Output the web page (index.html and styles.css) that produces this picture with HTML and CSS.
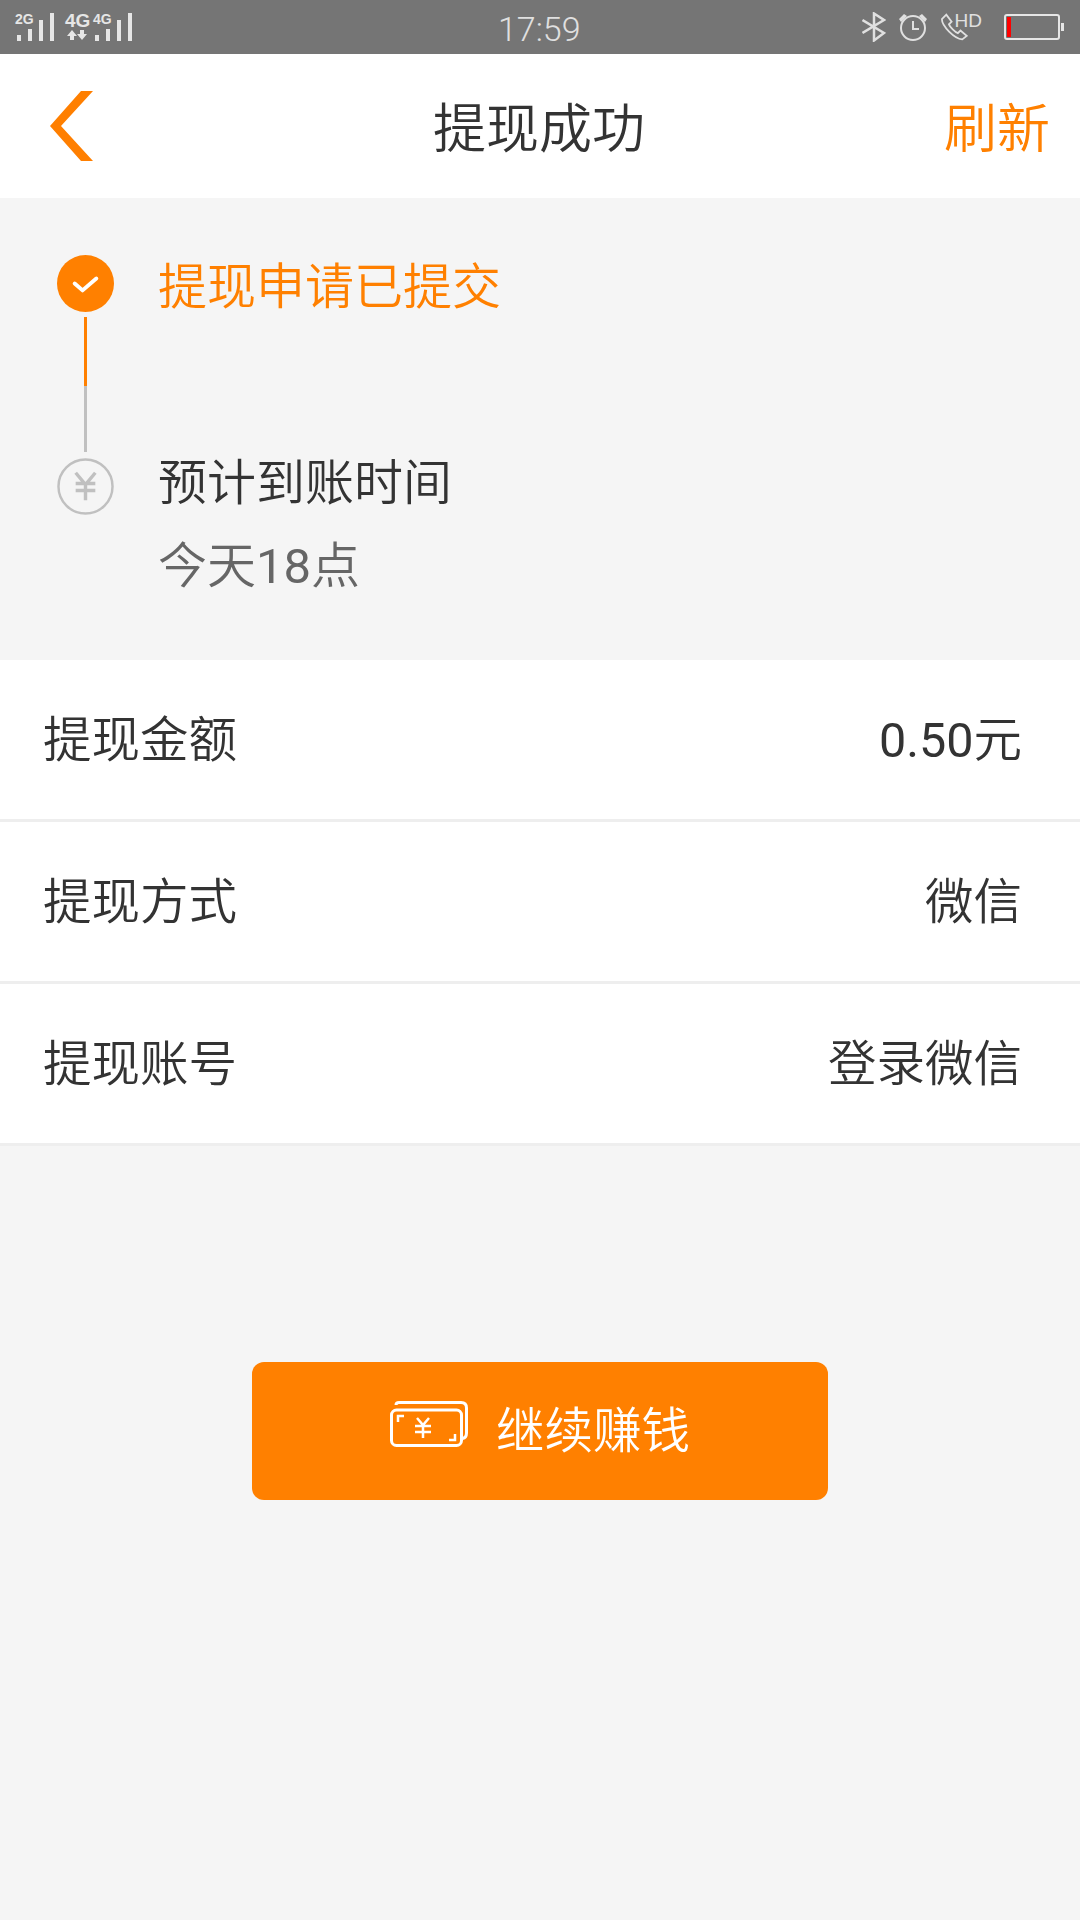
FILE: index.html
```html
<!DOCTYPE html>
<html lang="zh-CN">
<head>
    <meta charset="UTF-8">
    <meta name="viewport" content="width=device-width, initial-scale=1.0">
    <title>提现成功</title>
    <link rel="stylesheet" href="styles.css">
</head>
<body>
    <div class="status-bar">
        <svg class="status-signal" width="140" height="54" viewBox="0 0 140 54">
            <g fill="#e6e6e6">
                <rect x="17" y="35" width="4" height="6"/>
                <rect x="28" y="29" width="4" height="12"/>
                <rect x="39" y="20" width="4" height="21"/>
                <rect x="50" y="13" width="4" height="28"/>
                <rect x="95" y="35" width="4" height="6"/>
                <rect x="106" y="29" width="4" height="12"/>
                <rect x="117" y="20" width="4" height="21"/>
                <rect x="128" y="13" width="4" height="28"/>
                <path d="M72 30l5 6h-3v4h-4v-4h-3zM82 40l5-6h-3v-4h-4v4h-3z"/>
            </g>
            <g fill="#e6e6e6" font-family="'Liberation Sans', sans-serif" font-weight="bold">
                <text x="15" y="24" font-size="14">2G</text>
                <text x="65" y="27" font-size="19">4G</text>
                <text x="93" y="24" font-size="14">4G</text>
            </g>
        </svg>
        <div class="status-time">17:59</div>
        <div class="status-right">
            <svg width="24" height="30" viewBox="0 0 24 30" fill="none" stroke="#e0e0e0" stroke-width="2.500">
                <path d="M0.500 21L22 8 12 1.500v27L22 21 0.500 8"/>
            </svg>
            <svg width="28" height="30" viewBox="0 0 28 30" fill="none" stroke="#e0e0e0" stroke-width="2">
                <circle cx="14" cy="16" r="12"/>
                <path d="M14 9v8h6"/>
                <path d="M0 7l5-5 3 2-6 6zM28 7l-5-5-3 2 6 6z" fill="#e0e0e0" stroke="none"/>
            </svg>
            <div class="call-hd">
                <svg width="30" height="30" viewBox="0 0 30 30" fill="none" stroke="#e0e0e0" stroke-width="2">
                    <path d="M6 1L1 6c0 8 14 22 23 23l5-4-7-6-3 3c-3-1-9-7-10-10l3-3z"/>
                </svg>
                <span class="hd">HD</span>
            </div>
            <div class="battery">
                <div class="battery-body"><div class="battery-level"></div></div>
                <div class="battery-tip"></div>
            </div>
        </div>
    </div>

    <div class="nav">
        <svg class="nav-back" width="43" height="70" viewBox="0 0 43 70">
            <path d="M31 0h12L11 35l32 35H31L0 35z" fill="#ff7f00"/>
        </svg>
        <div class="nav-title">提现成功</div>
        <div class="nav-action">刷新</div>
    </div>

    <div class="steps">
        <div class="step-icons">
            <svg width="57" height="57" viewBox="0 0 58 58">
                <circle cx="29" cy="29" r="29" fill="#ff8000"/>
                <path d="M18 29l8 7 14-12" fill="none" stroke="#fff" stroke-width="4" stroke-linecap="round" stroke-linejoin="round"/>
            </svg>
            <div class="step-line"></div>
            <svg width="57" height="57" viewBox="0 0 58 58" fill="none" stroke="#c0c0c0">
                <circle cx="29" cy="29" r="27.500" stroke-width="2.500"/>
                <path d="M19 15l10 12 10-12M19 26h20M19 33h20M29 26v17" stroke-width="3.500"/>
            </svg>
        </div>
        <div class="step-text">
            <div class="step-done">提现申请已提交</div>
            <div class="step-title">预计到账时间</div>
            <div class="step-note">今天<span class="num">18</span>点</div>
        </div>
    </div>

    <div class="rows">
        <div class="row"><span class="row-text">提现金额</span><span class="row-text"><span class="num">0.50</span>元</span></div>
        <div class="row"><span class="row-text">提现方式</span><span class="row-text">微信</span></div>
        <div class="row"><span class="row-text">提现账号</span><span class="row-text">登录微信</span></div>
    </div>

    <div class="action">
        <div class="action-btn">
            <svg class="action-icon" width="78" height="46" viewBox="0 0 78 46" fill="none" stroke="#fff" stroke-width="3">
                <path d="M6 4c0-2 1-2.500 3-2.500h62c4 0 5.500 2 5.500 5.500v25c0 3-1 5-4 5.500"/>
                <rect x="1.500" y="9" width="70" height="35.500" rx="5"/>
                <path d="M8 21v-6h6M65 33v6h-6" stroke-width="2.500"/>
                <path d="M27 17l6 7 6-7M25 25h16M25 31h16M33 24v13" stroke-width="2.500"/>
            </svg>
            <span class="action-label">继续赚钱</span>
        </div>
    </div>
</body>
</html>
```
FILE: styles.css
```css
body {
    margin: 0;
    width: 1080px;
    height: 1920px;
    overflow: hidden;
    background-color: #f5f5f5;
    color: #333;
    font-family: Roboto, "Noto Sans CJK SC", "Liberation Sans", sans-serif;
    font-weight: 350;
    font-size: 48.500px;
}
.num {
    font-weight: 400;
}
.status-bar {
    height: 54px;
    background-color: #757575;
    display: flex;
    align-items: center;
    justify-content: space-between;
    padding-right: 16px;
    position: relative;
}
.status-time {
    position: absolute;
    left: 498px;
    top: 9px;
    color: #e0e0e0;
    font-family: Roboto, sans-serif;
    font-weight: 300;
    font-size: 34px;
    line-height: 40px;
}
.status-right {
    display: flex;
    align-items: center;
    gap: 13px;
}
.call-hd {
    display: flex;
    align-items: flex-start;
    height: 30px;
    width: 41px;
    margin-left: 1px;
}
.hd {
    color: #e0e0e0;
    font-family: "Liberation Sans", sans-serif;
    font-size: 19px;
    line-height: 18px;
    margin-left: -13px;
}
.battery {
    display: flex;
    align-items: center;
    margin-left: 9px;
}
.battery-body {
    width: 56px;
    height: 26px;
    box-sizing: border-box;
    border: 2px solid #e6e6e6;
    border-radius: 3px;
    padding: 1px;
}
.battery-level {
    width: 4px;
    height: 100%;
    background-color: #f00;
}
.battery-tip {
    width: 3px;
    height: 8px;
    background-color: #e6e6e6;
    margin-left: 1px;
}
.nav {
    height: 144px;
    background-color: #fff;
    display: flex;
    align-items: center;
    justify-content: center;
    position: relative;
}
.nav-back {
    position: absolute;
    left: 50px;
    top: 37px;
}
.nav-title {
    font-size: 53px;
    margin-bottom: 2px;
    margin-right: 2px;
}
.nav-action {
    position: absolute;
    right: 30px;
    top: 33px;
    color: #ff8000;
    font-size: 53px;
}
.steps {
    height: 462px;
    display: flex;
    box-sizing: border-box;
    padding: 57px 0 0 57px;
}
.step-icons {
    display: flex;
    flex-direction: column;
    align-items: center;
    width: 57px;
}
.step-line {
    width: 3px;
    height: 135px;
    margin: 5px 0 6px;
    background: linear-gradient(#ff8000 51%, #c0c0c0 51%);
}
.step-text {
    margin-left: 44px;
    font-size: 49px;
    line-height: 66px;
}
.step-done {
    color: #ff8000;
    margin-bottom: 130px;
}
.step-title {
    margin-bottom: 17px;
}
.step-note {
    color: #666;
}
.row {
    height: 159px;
    background-color: #fff;
    border-bottom: 3px solid #eee;
    display: flex;
    align-items: center;
    justify-content: space-between;
    padding: 0 58px 0 43px;
}
.row-text {
    margin-bottom: 8px;
}
.action {
    display: flex;
    justify-content: center;
    margin-top: 216px;
}
.action-btn {
    width: 576px;
    height: 138px;
    background-color: #ff8000;
    border-radius: 12px;
    color: #fff;
    display: flex;
    align-items: center;
    justify-content: center;
    gap: 28px;
}
.action-icon {
    margin-bottom: 15px;
}
.action-label {
    margin-bottom: 8px;
}
```
